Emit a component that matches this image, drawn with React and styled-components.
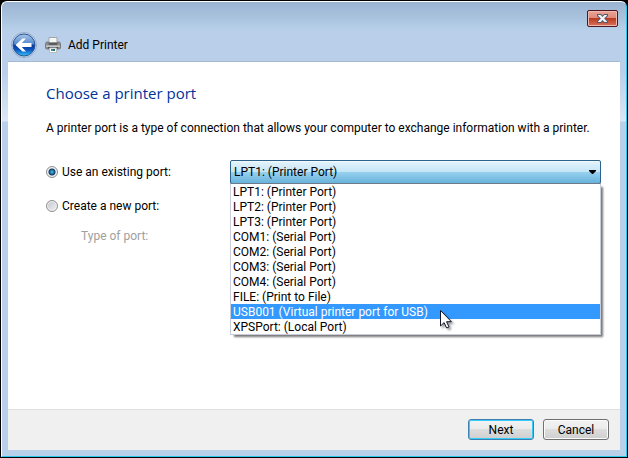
import React, { useState } from 'react';
import styled, { createGlobalStyle } from 'styled-components';

const ports = [
    'LPT1: (Printer Port)',
    'LPT2: (Printer Port)',
    'LPT3: (Printer Port)',
    'COM1: (Serial Port)',
    'COM2: (Serial Port)',
    'COM3: (Serial Port)',
    'COM4: (Serial Port)',
    'FILE: (Print to File)',
    'USB001 (Virtual printer port for USB)',
    'XPSPort: (Local Port)',
];

export default function App() {
    const [port, setPort] = useState(ports[0]);
    const [hovered, setHovered] = useState(8);
    const [mode, setMode] = useState('existing');

    return <>
        <GlobalStyle />
        <Desktop>
            <Window>
                <TitleBar>
                    <CloseButton aria-label="Close"><CloseIcon /></CloseButton>
                </TitleBar>
                <Header>
                    <BackButton aria-label="Back"><BackIcon /></BackButton>
                    <PrinterIcon />
                    <WindowTitle>Add Printer</WindowTitle>
                </Header>
                <Client>
                    <Content>
                        <Heading>Choose a printer port</Heading>
                        <Description>
                            A printer port is a type of connection that allows your computer to exchange information with a printer.
                        </Description>
                        <Form>
                            <Option>
                                <Radio name="mode" checked={mode === 'existing'} onChange={() => setMode('existing')} />
                                Use an existing port:
                            </Option>
                            <Combo>
                                <Select aria-label="Port" value={port} onChange={e => setPort(e.target.value)}>
                                    {ports.map(p => <option key={p}>{p}</option>)}
                                </Select>
                                <Arrow />
                                <List role="listbox" aria-label="Ports">
                                    {ports.map((p, i) => (
                                        <Item
                                            key={p}
                                            role="option"
                                            aria-selected={i === hovered}
                                            $active={i === hovered}
                                            onMouseEnter={() => setHovered(i)}
                                            onClick={() => setPort(p)}
                                        >
                                            {p}
                                            {i === 8 && <Pointer />}
                                        </Item>
                                    ))}
                                </List>
                            </Combo>
                            <Option>
                                <Radio name="mode" checked={mode === 'new'} onChange={() => setMode('new')} />
                                Create a new port:
                            </Option>
                            <SubLabel>Type of port:</SubLabel>
                        </Form>
                    </Content>
                    <Footer>
                        <Button $primary>Next</Button>
                        <Button>Cancel</Button>
                    </Footer>
                </Client>
            </Window>
        </Desktop>
    </>
}

const CloseIcon = () => (
    <svg width="11" height="9" viewBox="0 0 11 9" aria-hidden="true">
        <path d="M0 0h4l1.500 1.500L7 0h4v2L8.500 4.500 11 7v2H7L5.500 7.500 4 9H0V7l2.500-2.500L0 2z" fill="#535a70" />
        <path d="M1 1h2.600l1.900 1.900L7.400 1H10v.600L7.100 4.500 10 7.400V8H7.400L5.500 6.100 3.600 8H1v-.600l2.900-2.900L1 1.600z" fill="#f4f4f6" />
    </svg>
);

const BackIcon = () => (
    <svg width="26" height="26" viewBox="0 0 26 26" aria-hidden="true">
        <defs>
            <linearGradient id="ball" x1="0" y1="0" x2="0" y2="1">
                <stop offset="0" stopColor="#a9c6e8" />
                <stop offset=".46" stopColor="#5289cc" />
                <stop offset=".5" stopColor="#0a3796" />
                <stop offset=".72" stopColor="#0c55c0" />
                <stop offset="1" stopColor="#35c8f8" />
            </linearGradient>
        </defs>
        <circle cx="13" cy="13" r="12.500" fill="#c9dbf0" stroke="#93abc9" />
        <circle cx="13" cy="13" r="11" fill="url(#ball)" stroke="#2d5596" />
        <path d="M4.500 13l7-6.500H15L10.800 11H20.500v4h-9.700l4.200 4.500h-3.500z" fill="#fff" />
    </svg>
);

const PrinterIcon = () => (
    <svg width="16" height="16" viewBox="0 0 16 16" aria-hidden="true">
        <path d="M4 .5h8V6H4z" fill="#f6f6f4" stroke="#a2a4a6" />
        <path d="M1.500 5h2v2h9V5h2l1 1.500V11l-1 1h-13l-1-1V6.500z" fill="#8b8d90" stroke="#77797c" />
        <path d="M4 5.500h8V8H4z" fill="#5a5c60" />
        <path d="M1 8.500h14v1.500H1z" fill="#c6c8ca" />
        <path d="M3 10h10v1.500H3z" fill="#4b4d50" />
        <path d="M4.500 11h7v4.500h-7z" fill="#fff" stroke="#b7bcc0" />
        <path d="M6 12h2v2H6z" fill="#3a8ea8" />
        <path d="M8 12h2v2H8z" fill="#2f6f56" />
    </svg>
);

const Arrow = () => (
    <ArrowSvg width="7" height="4" viewBox="0 0 7 4" aria-hidden="true">
        <path d="M0 0h7v1L4 4H3L0 1z" fill="#000" />
    </ArrowSvg>
);

const Pointer = () => (
    <PointerSvg width="16" height="22" viewBox="0 0 16 22" aria-hidden="true">
        <path d="M.5.500v15.500l3.600-3.400 2.500 5.400 2.400-1.100-2.500-5.200h4.900z" fill="#fff" stroke="#14182c" />
    </PointerSvg>
);

const GlobalStyle = createGlobalStyle`
    * { box-sizing: border-box; }
    body {
        margin: 0;
        background: #000;
        color: #000;
        font: 12px/16px Roboto, sans-serif;
    }
    button, select, input { font: inherit; color: inherit; margin: 0; }
`;

const Desktop = styled.div`
    min-height: 100vh;
    display: flex;
    padding: 1px;
`;

const Window = styled.main`
    flex: 1;
    min-width: 0;
    display: flex;
    flex-direction: column;
    padding: 0 6px 6px;
    border: 1px solid #fff;
    border-right-color: #2cc8ec;
    border-bottom-color: #2cc8ec;
    border-radius: 6px 6px 0 0;
    background: linear-gradient(#99b3d1, #b6d0e9 28px, #b9cfea 29px, #b9cfea 70px, #dbe7f5 119px, #b9d0ea 120px);
`;

const TitleBar = styled.div`
    height: 28px;
    display: flex;
    justify-content: flex-end;
    align-items: flex-start;
    padding: 8px 2px 0;
`;

const CloseButton = styled.button`
    width: 31px;
    height: 17px;
    display: grid;
    place-items: center;
    padding: 0;
    border: 1px solid #4c1622;
    border-radius: 2px;
    box-shadow: inset 0 0 0 1px #f0b9b0;
    background: linear-gradient(#e9a598, #dc8878 48%, #b93b22 50%, #d9735c);
`;

const Header = styled.header`
    height: 32px;
    display: flex;
    align-items: center;
    padding: 0 0 2px 3px;
    border-bottom: 1px solid #a5b8d3;

    svg { flex: none; }
`;

const BackButton = styled.button`
    display: flex;
    padding: 0;
    margin-right: 8px;
    border: 0;
    background: none;
`;

const WindowTitle = styled.span`
    margin-left: 7px;
`;

const Client = styled.div`
    flex: 1;
    display: flex;
    flex-direction: column;
    background: #fff;
`;

const Content = styled.section`
    flex: 1;
    padding: 20px 19px 0 38px;
`;

const Heading = styled.h1`
    margin: 0;
    font-family: "Open Sans", sans-serif;
    font-size: 15px;
    line-height: 22px;
    font-weight: 400;
    color: #003399;
`;

const Description = styled.p`
    margin: 16px 0 24px;
`;

const Form = styled.div`
    display: grid;
    grid-template-columns: 184px 1fr;
    row-gap: 10px;
    align-items: center;
`;

const Option = styled.label`
    grid-column: 1;
    height: 24px;
    display: flex;
    align-items: center;
    gap: 4px;
`;

const Radio = styled.input.attrs({ type: 'radio' })`
    appearance: none;
    width: 12px;
    height: 12px;
    border: 1px solid #8e8f8f;
    border-radius: 50%;
    box-shadow: inset 0 0 0 1px #f4f4f4;
    background: linear-gradient(135deg, #c2c6cb, #f2f2f2);

    &:checked {
        background: radial-gradient(circle at 50% 50%, #5cbbe4 0, #1c6ea4 2px, #103a60 3px, #dfe3e6 4px);
    }
`;

const SubLabel = styled.span`
    grid-column: 1;
    padding-left: 35px;
    color: #a0a0a0;
`;

const Combo = styled.div`
    position: relative;
`;

const Select = styled.select`
    appearance: none;
    display: block;
    width: 100%;
    height: 24px;
    padding: 0 3px;
    border: 1px solid #2c628b;
    border-radius: 2px;
    box-shadow: inset 0 1px #f1f9fd;
    background: linear-gradient(#e5f4fc, #c4e5f6 49%, #98d1ef 50%, #68b3db);
`;

const ArrowSvg = styled.svg`
    position: absolute;
    top: 10px;
    right: 5px;
    pointer-events: none;
`;

const List = styled.ul`
    position: absolute;
    z-index: 1;
    top: 23px;
    left: 0;
    right: 0;
    margin: 0;
    padding: 0;
    list-style: none;
    border: 1px solid #c8cbd9;
    border-top-color: #6d7a8c;
    box-shadow: 3px 3px 2px -1px #777;
    background: #fff;
`;

const Item = styled.li`
    position: relative;
    height: 15px;
    padding: 0 2px;
    line-height: 17px;
    color: ${props => props.$active ? '#fff' : '#000'};
    background: ${props => props.$active ? '#3399ff' : 'none'};
`;

const PointerSvg = styled.svg`
    position: absolute;
    z-index: 2;
    top: 6px;
    left: 209px;
    filter: drop-shadow(2px 2px 1px rgba(0, 0, 0, .4));
    pointer-events: none;
`;

const Footer = styled.footer`
    display: flex;
    justify-content: flex-end;
    gap: 9px;
    padding: 9px 11px 10px;
    border-top: 1px solid #dfdfdf;
    background: #f0f0f0;
`;

const Button = styled.button`
    width: 66px;
    height: 21px;
    padding: 0;
    border: 1px solid ${props => props.$primary ? '#3c7fb1' : '#707070'};
    border-radius: 3px;
    box-shadow: inset 0 0 0 1px ${props => props.$primary ? '#35cdf7' : '#fbfbfb'};
    background: linear-gradient(#f2f2f2, #ebebeb 49%, #dddddd 50%, #cfcfcf);
`;
